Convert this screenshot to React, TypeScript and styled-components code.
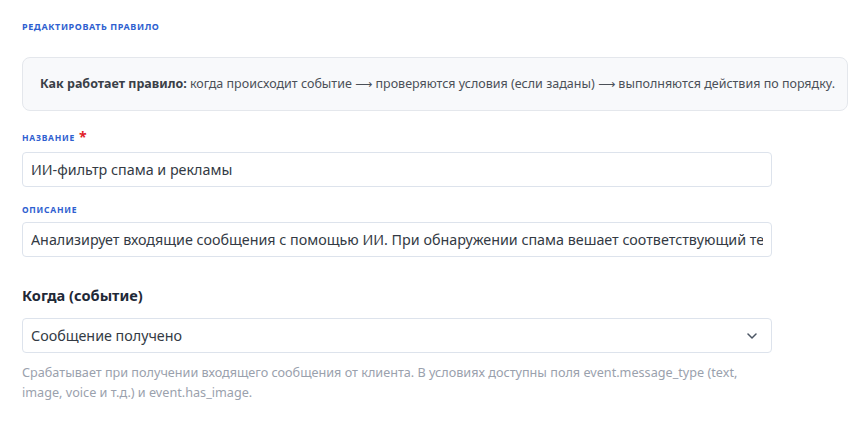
import React from "react";
import styled, { createGlobalStyle } from "styled-components";

const Global = createGlobalStyle`
  body {
    margin: 0;
    background: #ffffff;
    font-family: "Noto Sans", "Open Sans", sans-serif;
    color: #374151;
  }
`;

const Page = styled.div`
  padding: 21px 20px 20px 22px;
  width: 868px;
  box-sizing: border-box;
`;

const Eyebrow = styled.div`
  font-size: 9px;
  font-weight: 700;
  letter-spacing: 0.6px;
  text-transform: uppercase;
  color: #2f5fd0;
  line-height: 12px;
`;

const Info = styled.div`
  margin-top: 24px;
  width: 826px;
  box-sizing: border-box;
  background: #f8f9fb;
  border: 1px solid #e4e7ec;
  border-radius: 8px;
  padding: 16px 17px;
  font-size: 12.5px;
  line-height: 19px;
  color: #4b5058;
  white-space: nowrap;
  strong {
    color: #3a3f47;
    font-weight: 700;
  }
`;

const Arrow = styled.span`
  font-family: "DejaVu Sans", sans-serif;
  font-size: 12px;
`;

const Form = styled.div`
  width: 750px;
  display: flex;
  flex-direction: column;
`;

const Field = styled.div<{ $top: number }>`
  margin-top: ${(p) => p.$top}px;
  display: flex;
  flex-direction: column;
  gap: 7px;
`;

const Label = styled.label`
  font-size: 8.5px;
  font-weight: 700;
  letter-spacing: 0.75px;
  text-transform: uppercase;
  color: #2f5fd0;
  line-height: 11px;
  display: flex;
  align-items: center;
  gap: 4px;
`;

const Star = styled.span`
  color: #e11d2a;
  font-size: 14px;
  line-height: 16px;
`;

const Input = styled.input`
  box-sizing: border-box;
  height: 35px;
  width: 100%;
  border: 1px solid #dde3ec;
  border-radius: 4px;
  padding: 0 8px;
  font-family: inherit;
  font-size: 14.3px;
  color: #333a44;
  background: #fff;
  outline: none;
`;

const Heading = styled.h3`
  margin: 27px 0 0;
  font-size: 14.6px;
  font-weight: 700;
  color: #1f2937;
  line-height: 22px;
`;

const SelectBox = styled.div`
  margin-top: 12px;
  box-sizing: border-box;
  height: 35px;
  border: 1px solid #dde3ec;
  border-radius: 4px;
  padding: 0 14px 0 8px;
  display: flex;
  align-items: center;
  justify-content: space-between;
  font-size: 14.3px;
  color: #333a44;
`;

const Hint = styled.p`
  margin: 9px 0 0;
  font-size: 12.65px;
  line-height: 20px;
  color: #9aa1ad;
`;

export default function App() {
  return (
    <>
      <Global />
      <Page>
        <Eyebrow>Редактировать правило</Eyebrow>
        <Info>
          <strong>Как работает правило:</strong> когда происходит событие <Arrow>⟶</Arrow>{" "}
          проверяются условия (если заданы) <Arrow>⟶</Arrow> выполняются действия по порядку.
        </Info>
        <Form>
          <Field $top={18}>
            <Label>
              Название <Star>*</Star>
            </Label>
            <Input defaultValue="ИИ-фильтр спама и рекламы" />
          </Field>
          <Field $top={17}>
            <Label>Описание</Label>
            <Input defaultValue="Анализирует входящие сообщения с помощью ИИ. При обнаружении спама вешает соответствующий тег и отклоняет сообщение." />
          </Field>
          <Heading>Когда (событие)</Heading>
          <SelectBox>
            <span>Сообщение получено</span>
            <svg width="10" height="6" viewBox="0 0 10 6" fill="none">
              <path d="M1 1l4 4 4-4" stroke="#4b5563" strokeWidth="1.5" strokeLinecap="round" strokeLinejoin="round" />
            </svg>
          </SelectBox>
          <Hint>
            Срабатывает при получении входящего сообщения от клиента. В условиях доступны поля
            event.message_type (text, image, voice и т.д.) и event.has_image.
          </Hint>
        </Form>
      </Page>
    </>
  );
}
